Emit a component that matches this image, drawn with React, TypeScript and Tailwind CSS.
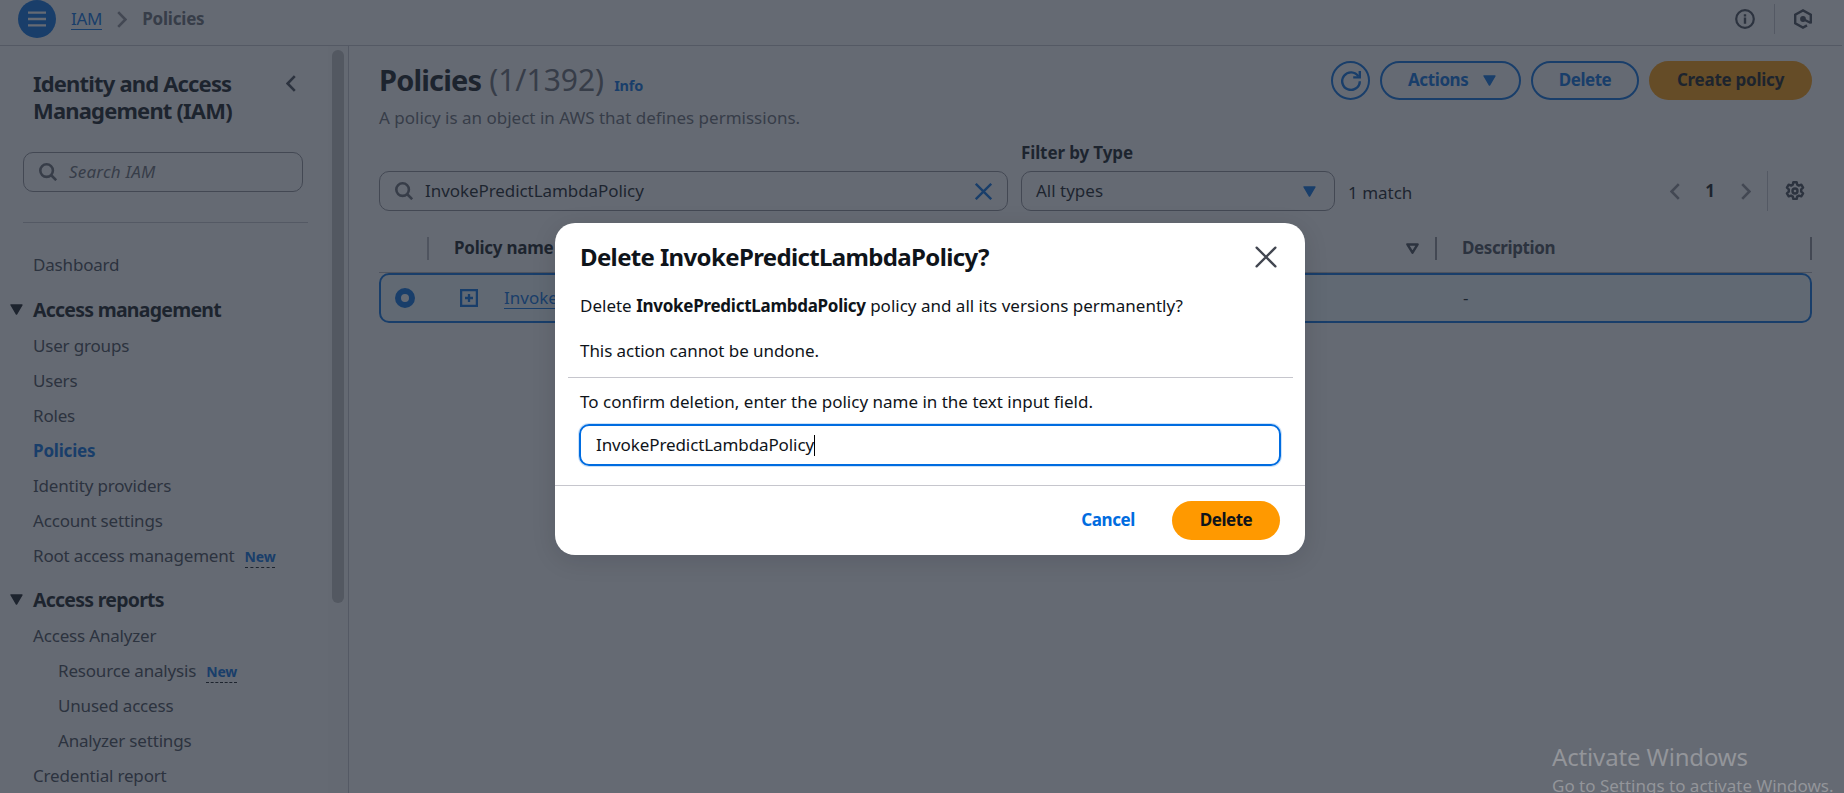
import type { ReactNode } from "react";

function Triangle({ className }: { className: string }) {
  return (
    <svg viewBox="0 0 12 10" className={className}>
      <path d="M1 .8h10L6 9.2z" fill="currentColor" stroke="currentColor" strokeWidth="1.4" strokeLinejoin="round" />
    </svg>
  );
}

function Chevron({ className, right = false }: { className: string; right?: boolean }) {
  return (
    <svg viewBox="0 0 10 17" fill="none" stroke="currentColor" strokeWidth="2.6" className={className}>
      <path d={right ? "M1.2 1.2 8.4 8.5l-7.2 7.3" : "M8.8 1.2 1.6 8.5l7.2 7.3"} />
    </svg>
  );
}

function Magnifier({ className }: { className: string }) {
  return (
    <svg viewBox="0 0 18 18" fill="none" stroke="currentColor" strokeWidth="2.6" className={className}>
      <circle cx="7.6" cy="7.6" r="6.3" />
      <path d="m12 12 5.2 5.2" />
    </svg>
  );
}

function NewBadge() {
  return (
    <span className="ml-2.5 mt-0.5 border-b border-dashed border-[#0f141a] text-[14px] font-bold leading-[21px] text-[#006ce0]">
      New
    </span>
  );
}

function NavItem({ children, nested = false, active = false }: { children: ReactNode; nested?: boolean; active?: boolean }) {
  return (
    <li
      className={`flex h-[35px] items-center tracking-[-0.18px] ${nested ? "pl-[25px]" : ""} ${
        active ? "font-bold text-[#006ce0]" : "text-[#424650]"
      }`}
    >
      {children}
    </li>
  );
}

function NavHeading({ children }: { children: ReactNode }) {
  return (
    <li className="-ml-[23px] flex h-[45px] items-center gap-[10px] pt-2 text-[19.5px] font-bold tracking-[-0.75px] text-[#0f141a]">
      <Triangle className="h-[11px] w-[13px]" />
      {children}
    </li>
  );
}

function Sidebar() {
  return (
    <aside className="flex w-[349px] shrink-0 border-r border-[#c6c6cd]">
      <div className="w-[328px] pl-[23px] pt-6">
        <div className="flex justify-between pl-[10px] pr-8">
          <h2 className="h-[55px] text-[22px] font-bold leading-[27px] tracking-[-0.83px] text-[#0f141a]">
            Identity and Access
            <br />
            Management (IAM)
          </h2>
          <Chevron className="mt-[5px] h-[17px] w-[10px] text-[#424650]" />
        </div>
        <div className="mt-[27px] flex h-10 w-[280px] items-center gap-3 rounded-[10px] border border-[#8c8c94] pl-[15px] text-[#656871]">
          <Magnifier className="h-[18px] w-[18px]" />
          <span className="italic tracking-[0.2px]">Search IAM</span>
        </div>
        <div className="mt-[30px] w-[285px] border-t border-[#c6c6cd]" />
        <ul className="pl-[10px] pt-6">
          <NavItem>Dashboard</NavItem>
          <li className="h-px" />
          <NavHeading>Access management</NavHeading>
          <NavItem>User groups</NavItem>
          <NavItem>Users</NavItem>
          <NavItem>Roles</NavItem>
          <NavItem active>Policies</NavItem>
          <NavItem>Identity providers</NavItem>
          <NavItem>Account settings</NavItem>
          <NavItem>
            Root access management
            <NewBadge />
          </NavItem>
          <NavHeading>Access reports</NavHeading>
          <NavItem>Access Analyzer</NavItem>
          <NavItem nested>
            Resource analysis
            <NewBadge />
          </NavItem>
          <NavItem nested>Unused access</NavItem>
          <NavItem nested>Analyzer settings</NavItem>
          <NavItem>Credential report</NavItem>
        </ul>
      </div>
      <div className="w-5 bg-[#fafafa] pl-1 pt-1">
        <div className="h-[553px] w-3 rounded-full bg-[#c1c1c1]" />
      </div>
    </aside>
  );
}

function TopBar() {
  return (
    <header className="flex h-[46px] w-[1842px] shrink-0 items-start border-b border-[#c6c6cd] pl-[18px]">
      <div className="flex h-[38px] w-[38px] items-center justify-center rounded-full bg-[#006ce0] text-white">
        <svg viewBox="0 0 18 16" className="h-4 w-[18px]" stroke="currentColor" strokeWidth="2.4">
          <path d="M0 1.6h18M0 8h18M0 14.4h18" />
        </svg>
      </div>
      <div className="flex h-[38px] items-center pl-[15px]">
        <span className="border-b border-[#006ce0] leading-[21px] tracking-[-0.3px] text-[#006ce0]">IAM</span>
        <Chevron right className="ml-[15px] h-[17px] w-[10px] text-[#8c8c94]" />
        <span className="ml-[15px] font-bold tracking-[-0.2px] text-[#656871]">Policies</span>
      </div>
      <div className="ml-auto flex h-[38px] items-center text-[#424650]">
        <svg viewBox="0 0 20 20" className="h-5 w-5" fill="none" stroke="currentColor" strokeWidth="2.2">
          <circle cx="10" cy="10" r="8.8" />
          <path d="M10 8.6v6.2M10 5.2v2.2" strokeWidth="2.4" />
        </svg>
        <div className="ml-[19px] h-[30px] w-px bg-[#c6c6cd]" />
        <svg viewBox="0 0 18 20" className="ml-[19px] mr-[30px] h-5 w-[18px]" fill="none" stroke="currentColor" strokeWidth="2.4">
          <path d="M16.8 14.6V5.7L9 1.4 1.2 5.7v8.6L9 18.6l4-2.2M9 10l7.8 4" />
          <circle cx="9" cy="10" r="2.9" fill="currentColor" stroke="none" />
        </svg>
      </div>
    </header>
  );
}

function PageHeader() {
  return (
    <div className="flex justify-between">
      <div>
        <h1 className="mt-px flex h-[38px] items-baseline leading-[38px]">
          <span className="text-[29px] font-bold tracking-[-0.85px] text-[#0f141a]">Policies</span>
          <span className="ml-[8px] text-[30px] text-[#656871]">(1/1392)</span>
          <span className="ml-[10px] text-[14.5px] font-bold leading-5 tracking-[-0.2px] text-[#006ce0]">Info</span>
        </h1>
        <p className="mt-[6px] leading-[25px] text-[#656871]">A policy is an object in AWS that defines permissions.</p>
      </div>
      <div className="flex gap-[10px] pt-px font-bold tracking-[-0.5px] text-[#006ce0]">
        <div className="flex h-[39px] w-[39px] items-center justify-center rounded-full border-2 border-[#006ce0]">
          <svg viewBox="0 0 20 20" className="h-5 w-5" fill="none" stroke="currentColor" strokeWidth="2.4">
            <path d="M18.8 10.2A8.8 8.8 0 1 1 17.4 5.4" />
            <path d="M18.8 0v6.4h-6.6" />
          </svg>
        </div>
        <div className="flex h-[39px] w-[141px] items-center rounded-full border-2 border-[#006ce0] pb-px pl-[26px]">
          <span className="w-[75px] tracking-[-0.4px]">Actions</span>
          <Triangle className="mt-px h-[11px] w-[13px]" />
        </div>
        <div className="flex h-[39px] w-[108px] items-center justify-center rounded-full border-2 border-[#006ce0] pb-px">Delete</div>
        <div className="flex h-[39px] w-[163px] items-center justify-center rounded-full bg-[#ff9900] pb-px tracking-[-0.25px] text-[#0f141a]">
          Create policy
        </div>
      </div>
    </div>
  );
}

function Filters() {
  return (
    <div className="mt-[10px] flex items-end">
      <div className="flex h-10 w-[629px] items-center rounded-[10px] border border-[#8c8c94] pl-[15px] text-[#0f141a]">
        <Magnifier className="h-[18px] w-[18px] text-[#656871]" />
        <span className="ml-3 grow tracking-[-0.07px]">InvokePredictLambdaPolicy</span>
        <svg viewBox="0 0 17 17" className="mr-[15px] h-[17px] w-[17px] text-[#006ce0]" stroke="currentColor" strokeWidth="2.4">
          <path d="m.8.8 15.4 15.4M16.2.8.8 16.2" />
        </svg>
      </div>
      <div className="ml-[13px] w-[314px]">
        <div className="h-[31px] font-bold leading-[25px] tracking-[-0.12px] text-[#0f141a]">Filter by Type</div>
        <div className="flex h-10 items-center justify-between rounded-[10px] border border-[#8c8c94] pb-px pl-[14px] pr-[18px] text-[#0f141a]">
          All types
          <Triangle className="mt-px h-[11px] w-[13px] text-[#006ce0]" />
        </div>
      </div>
      <span className="ml-[13px] pb-[6px] leading-[25px] text-[#0f141a]">1 match</span>
      <div className="ml-auto flex h-10 items-center">
        <Chevron className="h-[17px] w-[10px] text-[#8c8c94]" />
        <span className="ml-[24px] w-[12px] text-center font-bold text-[#0f141a]">1</span>
        <Chevron right className="ml-[25px] h-[17px] w-[10px] text-[#8c8c94]" />
        <div className="ml-[16px] h-10 w-px bg-[#c6c6cd]" />
        <svg viewBox="0 0 20 20" className="ml-[17px] mr-[7px] h-5 w-5 text-[#424650]" fill="none" stroke="currentColor" strokeWidth="2.4" strokeLinejoin="round">
          <path d="M8.3 1.2h3.4l.5 2.4 1.7 1 2.4-.9 1.8 3-1.9 1.6v2.4l1.9 1.7-1.8 3-2.4-.8-1.7 1-.5 2.3H8.3l-.5-2.3-1.7-1-2.4.8-1.8-3 1.9-1.7V8.3L1.9 6.7l1.8-3 2.4.9 1.7-1z" />
          <circle cx="10" cy="10" r="2.5" />
        </svg>
      </div>
    </div>
  );
}

function PolicyTable() {
  return (
    <div>
      <div className="flex h-[62px] items-center border-b border-[#b4b4bb] pb-px pt-[14px] font-bold text-[#424650]">
        <div className="w-[48px]" />
        <div className="h-[23px] w-0.5 bg-[#b4b4bb]" />
        <span className="ml-[25px] grow tracking-[-0.25px] text-[#0f141a]">Policy name</span>
        <svg viewBox="0 0 12 10" className="h-[11px] w-[13px]" fill="none" stroke="currentColor" strokeWidth="2.3" strokeLinejoin="round">
          <path d="M1.3 1.2h9.4L6 8.8z" />
        </svg>
        <div className="ml-[16px] h-[23px] w-0.5 bg-[#8c8c94]" />
        <span className="ml-[25px] w-[348px] tracking-[-0.4px]">Description</span>
        <div className="h-[23px] w-0.5 bg-[#8c8c94]" />
      </div>
      <div className="flex h-[50px] items-center rounded-[10px] border-2 border-[#006ce0] bg-[#f0fbff] pb-px pl-[14px] text-[#006ce0]">
        <div className="h-5 w-5 rounded-full border-[6px] border-[#006ce0] bg-white" />
        <svg viewBox="0 0 18 18" className="ml-[45px] h-[18px] w-[18px]" fill="none" stroke="currentColor" strokeWidth="2.3">
          <path d="M1.1 1.1h15.8v15.8H1.1zM9 5v8M5 9h8" />
        </svg>
        <span className="ml-[26px] mt-px border-b border-[#006ce0] leading-[21px]">InvokePredictLambdaPolicy</span>
        <span className="ml-auto w-[347px] text-[#0f141a]">-</span>
      </div>
    </div>
  );
}

function DeleteDialog() {
  return (
    <div className="flex h-[332px] w-[750px] flex-col rounded-[20px] bg-white text-[#0f141a] shadow-[0_5px_25px_rgba(0,7,22,0.12)]">
      <div className="flex h-[69px] shrink-0 items-center justify-between pb-0.5 pl-[25px] pr-[28px]">
        <h2 className="text-[24px] font-bold tracking-[-0.64px]">Delete InvokePredictLambdaPolicy?</h2>
        <svg viewBox="0 0 22 22" className="h-[22px] w-[22px] text-[#424650]" stroke="currentColor" strokeWidth="2.3" strokeLinecap="round">
          <path d="m1.6 1.6 18.8 18.8M20.4 1.6 1.6 20.4" />
        </svg>
      </div>
      <p className="pl-[25px] leading-[27px]">
        Delete <b className="tracking-[-0.27px]">InvokePredictLambdaPolicy</b> policy and all its versions permanently?
      </p>
      <p className="mt-[18px] pl-[25px] leading-[27px] tracking-[-0.06px]">This action cannot be undone.</p>
      <div className="mx-[12.5px] mt-[13px] border-t border-[#c6c6cd]" />
      <p className="mt-[10px] pl-[25px] leading-[27px]">To confirm deletion, enter the policy name in the text input field.</p>
      <div className="mx-6 mt-[9px] flex h-[42px] shrink-0 items-center rounded-[10px] border-2 border-[#006ce0] pl-[15px] tracking-[-0.1px] shadow-[0_0_0_1px_rgba(0,108,224,0.2)]">
        InvokePredictLambdaPolicy
        <span className="h-[21px] w-px bg-black" />
      </div>
      <div className="mt-auto flex h-[70px] items-center justify-end border-t border-[#c6c6cd] pr-[25px] font-bold">
        <span className="pb-px tracking-[-0.4px] text-[#006ce0]">Cancel</span>
        <div className="ml-[37px] flex h-[39px] w-[108px] items-center justify-center rounded-full bg-[#ff9900] pb-px tracking-[-0.5px]">
          Delete
        </div>
      </div>
    </div>
  );
}

export default function App() {
  return (
    <div className="relative flex h-[793px] w-[1844px] flex-col overflow-hidden bg-white font-['Noto_Sans','Open_Sans',sans-serif] text-[17px]">
      <TopBar />
      <div className="flex min-h-0 grow">
        <Sidebar />
        <main className="grow pl-[30px] pr-8 pt-[14px]">
          <PageHeader />
          <Filters />
          <PolicyTable />
        </main>
      </div>
      <div className="absolute inset-0 flex items-start justify-center bg-[rgba(35,43,55,0.7)] pl-4 pt-[223px]">
        <DeleteDialog />
      </div>
      <div className="absolute left-[1552px] top-[740px] whitespace-nowrap text-[#93959a]">
        <div className="text-[24px] leading-[33px] tracking-[-0.15px]">Activate Windows</div>
        <div className="leading-[25px]">Go to Settings to activate Windows.</div>
      </div>
    </div>
  );
}
